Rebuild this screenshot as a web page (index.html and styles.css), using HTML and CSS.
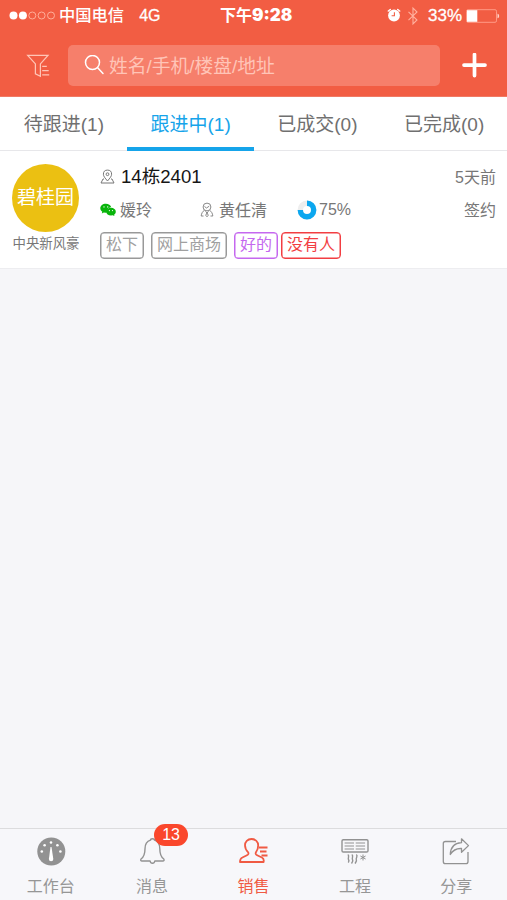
FILE: index.html
```html
<!DOCTYPE html>
<html lang="zh-CN">
<head>
<meta charset="utf-8">
<meta name="viewport" content="width=device-width, initial-scale=1">
<title>销售</title>
<link rel="stylesheet" href="styles.css">
</head>
<body>
<div class="app">
  <header class="header">
    <div class="status">
      <div class="status-left">
        <svg class="signal" width="46" height="10" viewBox="0 0 46 10"><g fill="#fff"><circle cx="4.500" cy="4.500" r="4"/><circle cx="13.900" cy="4.500" r="4"/></g><g fill="none" stroke="#ffad99" stroke-width="1"><circle cx="23.300" cy="4.500" r="3.500"/><circle cx="32.600" cy="4.500" r="3.500"/><circle cx="42" cy="4.500" r="3.500"/></g></svg>
        <span class="carrier">中国电信</span>
        <span class="network">4G</span>
      </div>
      <div class="time">下午<b>9:28</b></div>
      <div class="status-right">
        <svg class="alarm" width="14" height="15" viewBox="0 0 14 15"><circle cx="7" cy="7.500" r="5.900" fill="#fff"/><path d="M1.300 3 3.300 1.500M12.700 3 10.700 1.500" stroke="#fff" stroke-width="1.500" stroke-linecap="round"/><path d="M7.400 4.300v3.400H4.600" fill="none" stroke="#f25d43" stroke-width="1.100"/></svg>
        <svg class="bluetooth" width="12" height="20" viewBox="0 0 12 20"><path d="M1.500 5.800 10 14 6 18V2l4 4-8.500 8.200" fill="none" stroke="#ffb19f" stroke-width="1.100"/></svg>
        <span class="percent">33%</span>
        <svg class="battery" width="34" height="14" viewBox="0 0 34 14"><rect x=".5" y=".7" width="30" height="12.600" rx="1.500" fill="none" stroke="#ff9a86"/><path d="M1 1.200h10.300v11.600H1z" fill="#fff"/><path d="M31.500 4.800c2.200.5 2.200 4 0 4.500z" fill="#ffd3c9"/></svg>
      </div>
    </div>
    <div class="search-row">
      <svg class="filter" width="24" height="24" viewBox="0 0 24 24" fill="none" stroke="#ffc5b6" stroke-width="1.250"><path d="M1.700 1.400h20.300l-7.600 8.500v12.300l-5-2.300v-10z"/><path d="M16.200 12.300h4.600M16.200 16.500h6.500M16.200 20.800h7"/></svg>
      <div class="search">
        <svg width="21" height="21" viewBox="0 0 21 21" fill="none" stroke="#fff" stroke-width="1.500" stroke-linecap="round"><circle cx="8.500" cy="7.500" r="7"/><path d="m13.700 12.800 5.300 5.700"/></svg>
        <span>姓名/手机/楼盘/地址</span>
      </div>
      <svg class="plus" width="26" height="26" viewBox="0 0 26 26"><path d="M13.500 1.600v21M3 12.100h21" stroke="#fff" stroke-width="3.700" stroke-linecap="round"/></svg>
    </div>
  </header>

  <nav class="tabs">
    <div class="tab">待跟进(1)</div>
    <div class="tab active">跟进中(1)</div>
    <div class="tab">已成交(0)</div>
    <div class="tab">已完成(0)</div>
  </nav>

  <main class="content">
    <article class="card">
      <div class="project">
        <div class="avatar">碧桂园</div>
        <div class="project-name">中央新风豪</div>
      </div>
      <div class="details">
        <div class="row title-row">
          <svg width="15" height="16" viewBox="0 0 15 16" fill="none" stroke="#777" stroke-width="1"><path d="M7.500 12C5 9 3.400 7.300 3.400 5.200a4.100 4.100 0 0 1 8.200 0C11.600 7.300 10 9 7.500 12z"/><circle cx="7.500" cy="5.200" r="1.400"/><path d="M4 10H3L1 14h13l-2-4h-1"/></svg>
          <span class="address">14栋2401</span>
          <span class="aside">5天前</span>
        </div>
        <div class="row people-row">
          <div class="client">
            <svg width="16" height="14" viewBox="0 0 16 14"><path d="M5.800.8C2.700.8.300 2.800.300 5.300c0 1.400.8 2.700 2 3.500l-.5 1.600 2-1 2 .4 1.500-.3C7 6.500 8.700 4.300 11.200 4.300 10.700 2.300 8.500.8 5.800.8z" fill="#08b40b"/><path d="M11 4.800c-2.700 0-4.700 1.700-4.700 3.900s2 3.800 4.700 3.800l1.600-.3 1.900.9-.5-1.400c1.100-.7 1.800-1.800 1.800-3C15.800 6.500 13.700 4.800 11 4.800z" fill="#08b40b"/><g fill="#fff"><circle cx="4" cy="3.900" r=".7"/><circle cx="7.700" cy="3.900" r=".7"/><circle cx="9.400" cy="7.600" r=".6"/><circle cx="12.500" cy="7.600" r=".6"/></g></svg>
            <span>媛玲</span>
          </div>
          <div class="agent">
            <svg width="14" height="16" viewBox="0 0 14 16" fill="none" stroke="#888" stroke-width="1"><circle cx="7" cy="5" r="3.900"/><path d="M4.500 4.500 6.500 6l2.700-1.800M4.500 8.200C2.500 9.500 1.400 11.500 1.200 14h2.300M9.500 8.200c2 1.300 3.100 3.300 3.300 5.800h-2.300M5.500 9.300 7 11l1.500-1.700M7 11l-1.300 2.200L7 14.800l1.300-1.600z"/></svg>
            <span>黄任清</span>
          </div>
          <div class="progress">
            <svg width="20" height="20" viewBox="0 0 20 20" fill="none" stroke-width="5.400"><circle cx="10" cy="10" r="6.700" stroke="#eee"/><path d="M10 3.300A6.700 6.700 0 1 1 3.300 10" stroke="#0ca7ef"/></svg>
            <span>75%</span>
          </div>
          <span class="aside">签约</span>
        </div>
        <div class="tags">
          <span class="tag">松下</span>
          <span class="tag">网上商场</span>
          <span class="tag purple">好的</span>
          <span class="tag red">没有人</span>
        </div>
      </div>
    </article>
  </main>

  <footer class="tabbar">
    <div class="item">
      <svg width="30" height="30" viewBox="0 0 30 30"><circle cx="15.300" cy="14.500" r="14" fill="#929292"/><g fill="#fff"><circle cx="15" cy="5.500" r="1.300"/><circle cx="8.600" cy="8.200" r="1.300"/><circle cx="21.400" cy="8.200" r="1.300"/><circle cx="5.800" cy="14.500" r="1.300"/><circle cx="24.400" cy="14.500" r="1.300"/><path d="M14.500 10h1l1.800 12a2.200 2.200 0 0 1-4.400 0z"/></g></svg>
      <span>工作台</span>
    </div>
    <div class="item">
      <div class="bell">
        <svg width="30" height="30" viewBox="0 0 30 30" fill="none" stroke="#929292" stroke-width="1.400" stroke-linejoin="round"><path d="M13.500 3.200c0-2 4-2 4 0 4 1.300 5.300 4.300 5.300 8.500 0 5 .5 7.800 4 10.300.7 1.200.2 2-1 2h-8c-.5 3-4.200 3-4.700 0H5c-1.200 0-1.700-.8-1-2 3.500-2.500 4-5.300 4-10.300 0-4.200 1.500-7.200 5.500-8.500z"/></svg>
        <span class="badge">13</span>
      </div>
      <span>消息</span>
    </div>
    <div class="item selected">
      <svg width="30" height="30" viewBox="0 0 30 30" fill="none" stroke="#f05a43" stroke-width="1.800" stroke-linejoin="round"><path d="M13.500 2c-4 0-6.500 2.700-6.500 6.300 0 3 1.200 5.200 3.200 7 .6 1.200.2 2.300-1.200 2.900l-4.600 2.300C2.700 21.200 2 23 2 25h23.600c.4-2-.2-3.800-1.700-4.500l-4.800-2.300c-1.400-.6-1.800-1.700-1.200-2.900 1.500-1.800 2.300-4 2.300-7C20.200 4.700 17.500 2 13.500 2z"/><path d="M20.800 10.500H29.500M22 14.500h6.500M23.500 18.500h6"/></svg>
      <span>销售</span>
    </div>
    <div class="item">
      <svg width="30" height="30" viewBox="0 0 30 30" fill="none" stroke="#929292" stroke-width="1.400"><rect x="2" y="2.800" width="26" height="12.200" rx="1.300"/><path d="M4.600 6h9.400M15.700 6h9.400M4.600 9h9.400M15.700 9h9.400M4.600 12h9.400M15.700 12h9.400" stroke-width="1.200"/><path d="M7.800 17.500c2.200 1.500-.3 3.500.7 5s.5 1.800-.3 3M11.800 17.500c2.200 1.500-.3 3.500.7 5s0 2.500-1 4M16.300 17.500c2.200 1.500-.8 3.500 0 5s-.3 2.500-1.300 4"/><path d="M23 17.500v6M20.400 19l5.200 3M25.600 19l-5.200 3" stroke-width="1"/></svg>
      <span>工程</span>
    </div>
    <div class="item">
      <svg width="30" height="30" viewBox="0 0 30 30" fill="none" stroke="#929292" stroke-width="1.300" stroke-linejoin="round"><path d="M15 4.500H4.500C3 4.500 2.300 5.200 2.300 6.500v18c0 1.500.7 2.200 2.200 2.200h20.300c1.500 0 2.200-.7 2.200-2.200V15"/><path d="M20.500 1.800 27.500 8.600l-7 6.700v-3.800c-5.500-.3-8.500 1.500-11.200 6 .2-7 4-11.300 11.200-11.800z"/></svg>
      <span>分享</span>
    </div>
  </footer>
</div>
</body>
</html>
```
FILE: styles.css
```css
* {
  box-sizing: border-box;
}

body {
  margin: 0;
  font-family: "Liberation Sans", "Noto Sans CJK SC", sans-serif;
  font-size: 16px;
  color: #777;
  background: #f6f6f9;
}

svg {
  display: block;
  flex: none;
}

.app {
  display: flex;
  flex-direction: column;
  height: 900px;
  white-space: nowrap;
}

.header {
  height: 97px;
  background: #f25d43;
  border-bottom: 1px solid #f07a65;
  color: #fff;
}

.status {
  display: grid;
  grid-template-columns: 200px 1fr 200px;
  align-items: center;
  height: 30px;
  line-height: 30px;
}

.status-left,
.status-right {
  display: flex;
  align-items: center;
  height: 29px;
  line-height: 29px;
}

.status-left {
  padding-left: 9px;
}

.carrier {
  margin-left: 4px;
  font-size: 16.300px;
  font-weight: 500;
}

.network {
  margin-left: 15px;
  -webkit-text-stroke: 0.3px #fff;
}

.time {
  padding-left: 20px;
  font-size: 16px;
  font-weight: bold;
}

.time b {
  font-family: Inter, "Liberation Sans", sans-serif;
  font-size: 17px;
}

.status-right {
  padding-left: 80px;
}

.bluetooth {
  margin-left: 6px;
}

.percent {
  margin-left: 9px;
  font-size: 17px;
  -webkit-text-stroke: 0.3px #fff;
}

.battery {
  margin-left: 4px;
}

.search-row {
  display: flex;
  align-items: center;
  margin-top: 15px;
  padding-left: 26px;
}

.search {
  display: flex;
  align-items: center;
  gap: 4px;
  width: 372px;
  height: 41px;
  margin-left: 18px;
  padding-left: 16px;
  border-radius: 5px;
  background: #f67f6b;
  color: #ffc4b7;
  font-size: 18.800px;
}

.search span {
  padding-bottom: 3px;
}

.plus {
  margin-left: 21px;
}

.tabs {
  display: grid;
  grid-template-columns: repeat(4, 1fr);
  height: 54px;
  background: #fff;
  border-bottom: 1px solid #e7e7ea;
}

.tab {
  height: 54px;
  padding-left: 1px;
  line-height: 56px;
  text-align: center;
  font-size: 19px;
  color: #707070;
}

.tab.active {
  border-bottom: 4px solid #16a4ea;
  color: #16a4ea;
}

.content {
  flex: 1;
}

.card {
  display: flex;
  height: 118px;
  padding: 13px 11px 0 12px;
  background: #fff;
  border-bottom: 1px solid #ededf0;
}

.project {
  width: 68px;
  text-align: center;
}

.avatar {
  width: 67px;
  height: 68px;
  border-radius: 50%;
  background: #ebc012;
  color: #fff;
  font-size: 19px;
  line-height: 67px;
}

.project-name {
  font-size: 13.400px;
  line-height: 23px;
}

.details {
  flex: 1;
  margin-left: 20px;
}

.row {
  display: flex;
  align-items: center;
}

.title-row {
  height: 26px;
}

.address {
  margin-left: 6px;
  padding-bottom: 5px;
  font-size: 18.600px;
  color: #161616;
}

.aside {
  margin-left: auto;
  padding-bottom: 2px;
}

.people-row {
  height: 40px;
}

.client,
.agent,
.progress {
  display: flex;
  align-items: center;
}

.client span,
.agent span {
  padding-bottom: 2px;
}

.client {
  gap: 4px;
  width: 100px;
}

.agent {
  gap: 5px;
  width: 97px;
}

.progress {
  gap: 2px;
}

.tags {
  display: flex;
  margin-top: 2px;
}

.tag {
  height: 27px;
  padding: 0 5px;
  border: 1px solid #999;
  box-shadow: inset 0 0 0 0.500px #999;
  border-radius: 4px;
  line-height: 24px;
  color: #a0a0a0;
  margin-right: 7px;
}

.tag.purple {
  margin-right: 3px;
  color: #c568ef;
  border-color: #c568ef;
  box-shadow: inset 0 0 0 0.500px #c568ef;
}

.tag.red {
  margin-right: 0;
  color: #f23e42;
  border-color: #f23e42;
  box-shadow: inset 0 0 0 0.500px #f23e42;
}

.tabbar {
  display: grid;
  grid-template-columns: repeat(5, 1fr);
  height: 72px;
  border-top: 1px solid #dcdcde;
  background: #f7f7fa;
}

.item {
  display: flex;
  flex-direction: column;
  align-items: center;
  padding-top: 8px;
  color: #969696;
}

.item > span {
  margin-top: 8px;
  line-height: 24px;
}

.item.selected {
  color: #f05a43;
}

.bell {
  position: relative;
}

.badge {
  position: absolute;
  left: 17px;
  top: -13px;
  width: 34px;
  height: 22px;
  border-radius: 11px;
  background: #fa472c;
  color: #fff;
  font-size: 16px;
  line-height: 22px;
  text-align: center;
}
```
